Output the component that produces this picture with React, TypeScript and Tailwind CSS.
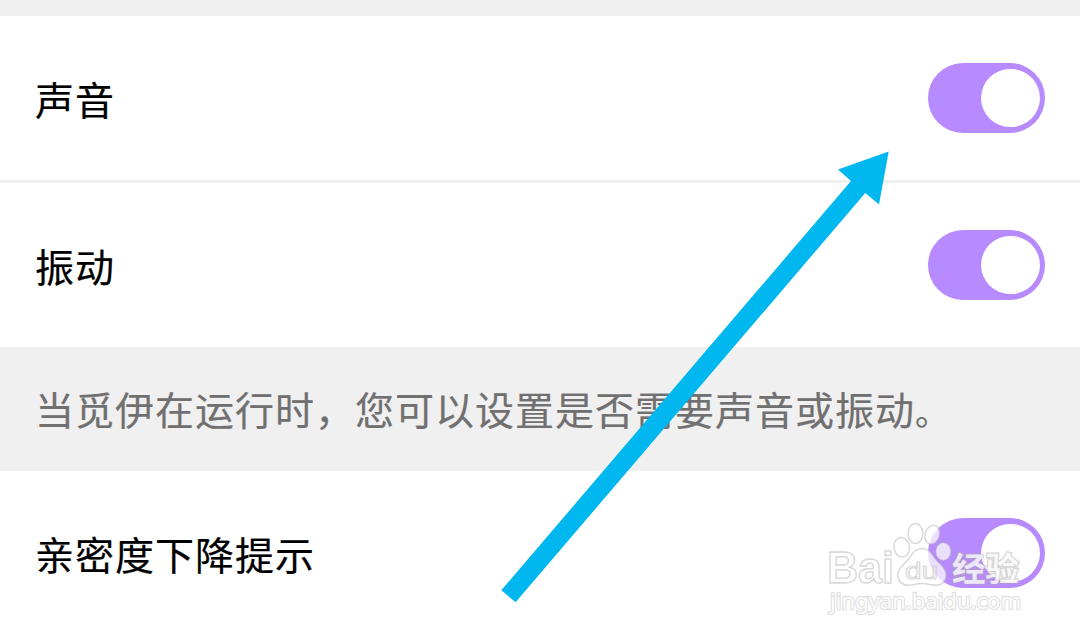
interface ToggleProps {
  label: string;
}

function Toggle({ label }: ToggleProps) {
  return (
    <button
      role="switch"
      aria-checked="true"
      aria-label={label}
      className="flex h-[70px] w-[117px] shrink-0 items-center justify-end rounded-full bg-[#b88aff] pr-[5.5px]"
    >
      <span className="size-[58.5px] rounded-full bg-white" />
    </button>
  );
}

function SettingRow({ label }: { label: string }) {
  return (
    <div className="flex h-[164px] shrink-0 items-center justify-between bg-white pr-[35px] pl-[35px]">
      <span className="pb-px text-[39px] leading-[60px] tracking-[1px] text-black [-webkit-text-stroke:0.2px_#000]">
        {label}
      </span>
      <Toggle label={label} />
    </div>
  );
}

function Arrow() {
  return (
    <svg className="pointer-events-none absolute inset-0" width="1080" height="639" viewBox="0 0 1080 639">
      <path
        d="M888.7 151.5 838 169.5 851 181 501.3 590.3 515.6 602.2 865.3 193 879 204.5Z"
        fill="#00b7ef"
      />
    </svg>
  );
}

function Watermark() {
  return (
    <svg
      className="pointer-events-none absolute top-[515px] left-[820px]"
      width="210"
      height="105"
      viewBox="820 515 210 105"
      fill="#fff"
      fillOpacity="0.72"
      stroke="#aaa"
      strokeOpacity="0.45"
      strokeWidth="1.5"
    >
      {/* Paw */}
      <ellipse cx="901.7" cy="547.3" rx="7.8" ry="9.8" transform="rotate(-12 901.7 547.3)" />
      <ellipse cx="915.5" cy="533.5" rx="7.4" ry="10" />
      <ellipse cx="932.3" cy="534.7" rx="7.2" ry="9.6" transform="rotate(18 932.3 534.7)" />
      <ellipse cx="943.3" cy="551.5" rx="7.6" ry="9" />
      <path d="M922 548.5C915 548.5 912.5 553.5 909 558.5C905 564 897.8 567.5 897.8 575C897.8 581 902 585.2 908 585.2C913 585.2 916 583.5 922 583.5C928 583.5 931 585.2 936 585.2C942 585.2 946.2 581 946.2 575C946.2 567.5 939 564 935 558.5C931.5 553.5 929 548.5 922 548.5Z" />
      <text x="827" y="583" textLength="67" lengthAdjust="spacingAndGlyphs" className="font-['Liberation_Sans',sans-serif] text-[44px] font-bold">Bai</text>
      <text x="905" y="579" textLength="33" lengthAdjust="spacingAndGlyphs" strokeWidth="1.2" className="font-['Liberation_Sans',sans-serif] text-[24px]">du</text>
      <text x="952" y="581" textLength="67" lengthAdjust="spacingAndGlyphs" fillOpacity="0.8" strokeWidth="2.4" strokeOpacity="0.5" className="font-['Noto_Sans_CJK_SC',sans-serif] text-[33px] font-bold [paint-order:stroke]">经验</text>
      <text x="830" y="609" textLength="191" lengthAdjust="spacingAndGlyphs" fillOpacity="0.9" strokeWidth="2.4" strokeOpacity="0.35" className="font-['Noto_Sans',sans-serif] text-[22px] [paint-order:stroke]">jingyan.baidu.com</text>
    </svg>
  );
}

export default function App() {
  return (
    <div className="relative flex h-[639px] w-[1080px] flex-col overflow-hidden bg-white font-['Noto_Sans_CJK_SC',sans-serif]">
      <div className="h-4 shrink-0 bg-[#f0f0f0]" />
      <SettingRow label="声音" />
      <div className="h-[3px] shrink-0 bg-[#f0f0f0]" />
      <SettingRow label="振动" />
      <div className="flex h-[124px] shrink-0 items-center bg-[#f0f0f0] pl-[35px]">
        <p className="text-[39px] leading-[60px] tracking-[1px] whitespace-nowrap text-[#707070] [-webkit-text-stroke:0.2px_#707070]">
          当觅伊在运行时，您可以设置是否需要声音或振动<span className="text-[34px]">。</span>
        </p>
      </div>
      <SettingRow label="亲密度下降提示" />
      <Arrow />
      <Watermark />
    </div>
  );
}
